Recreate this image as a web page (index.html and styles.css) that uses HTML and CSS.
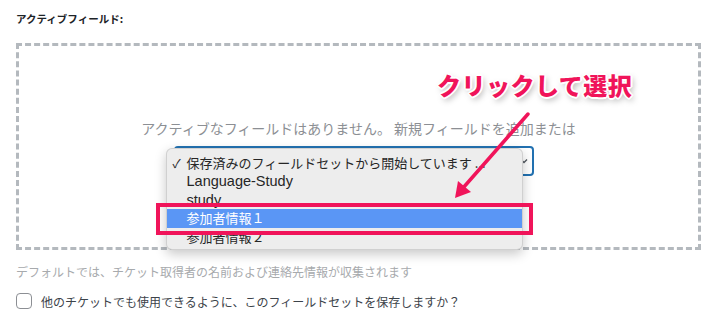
FILE: index.html
```html
<!doctype html>
<html lang="ja">
<head>
  <meta charset="utf-8">
  <meta name="viewport" content="width=device-width,initial-scale=1">
  <title>アクティブフィールド</title>
  <link rel="stylesheet" href="styles.css">
</head>
<body>
  <div class="page">
    <div class="field-label">アクティブフィールド:</div>

    <div class="dropzone">
      <p class="empty-msg">アクティブなフィールドはありません。 新規フィールドを追加または</p>
      <div class="select-wrap">
        <div class="fake-select">
          <svg class="chev" width="8" height="6" viewBox="0 0 8 6"><path d="M1 1.5 L4 4.5 L7 1.5" fill="none" stroke="#50575e" stroke-width="1.3"/></svg>
        </div>
        <ul class="menu">
          <li class="checked"><span class="tick">✓</span>保存済みのフィールドセットから開始しています ...</li>
          <li><span class="latin">Language-Study</span></li>
          <li><span class="latin">study</span></li>
          <li class="hl">参加者情報１</li>
          <li>参加者情報２</li>
        </ul>
      </div>
    </div>

    <p class="hint">デフォルトでは、チケット取得者の名前および連絡先情報が収集されます</p>

    <label class="save-row">
      <span class="box"></span>
      <span>他のチケットでも使用できるように、このフィールドセットを保存しますか？</span>
    </label>
  </div>

  <!-- annotation layer -->
  <div class="callout">クリックして選択</div>
  <svg class="marks" width="717" height="325" viewBox="0 0 717 325">
    <rect x="158" y="205" width="373" height="28" fill="none" stroke="#f0145a" stroke-width="4"/>
    <line x1="528" y1="114" x2="463" y2="188" stroke="#f0145a" stroke-width="3.5" stroke-linecap="round"/>
    <polygon points="455,198 458,181 471,192" fill="#f0145a"/>
  </svg>
</body>
</html>
```

FILE: styles.css
```css
*{ box-sizing:border-box; }
body{ margin:0; background:#fff; color:#1d2327; font-family:"Noto Sans CJK JP","Liberation Sans",sans-serif; }
.page{ padding:11px 16px 0; }

.field-label{ font-size:10.5px; font-weight:700; line-height:16px; color:#1d2327; }

.dropzone{ margin-top:16px; height:207px; border:3px dashed #b4b9be; display:flex; flex-direction:column; align-items:center; justify-content:center; }
.empty-msg{ margin:0; font-size:14px; line-height:20px; color:#8c8f94; }

.select-wrap{ position:relative; width:360px; margin:8px 10px 0 0; }
.fake-select{ height:30px; border:2px solid #2271b1; border-radius:4px; background:#fff; position:relative; }
.chev{ position:absolute; right:4px; top:10px; }

.menu{ position:absolute; left:-8px; top:2px; width:357px; height:102px; margin:0; padding:5px 0 0; list-style:none; overflow:hidden;
  background:#ededed; border:1px solid rgba(0,0,0,.12); border-radius:6px; box-shadow:0 4px 12px rgba(0,0,0,.22); }
.menu li{ position:relative; height:18.5px; line-height:18.5px; padding-left:20px; font-size:13px; color:#262626; white-space:nowrap; }
.menu .tick{ position:absolute; left:6px; top:0; font-size:12px; }
.menu .latin{ font-family:"Liberation Sans",sans-serif; font-size:14.5px; }
.menu li.hl{ background:#5a96f5; color:#fff; }

.hint{ margin:14px 0 0; font-size:12px; line-height:16px; color:#a7aaad; }

.save-row{ display:flex; align-items:center; gap:9px; margin-top:11px; height:20px; font-size:12px; color:#3c434a; }
.box{ width:16px; height:16px; border:1px solid #8c8f94; border-radius:4px; background:#fff; flex:none; }

.callout{ position:absolute; left:437px; top:70px; font-size:24px; line-height:30px; font-weight:900; letter-spacing:.5px; color:#f0145a;
  text-shadow:0 0 1px #fff,1px 1px 0 #fff,-1px -1px 0 #fff,1px -1px 0 #fff,-1px 1px 0 #fff,2px 0 0 #fff,-2px 0 0 #fff,0 2px 0 #fff,0 -2px 0 #fff,2px 3px 6px rgba(0,0,0,.35); }
.marks{ position:absolute; left:0; top:0; pointer-events:none; }
```
